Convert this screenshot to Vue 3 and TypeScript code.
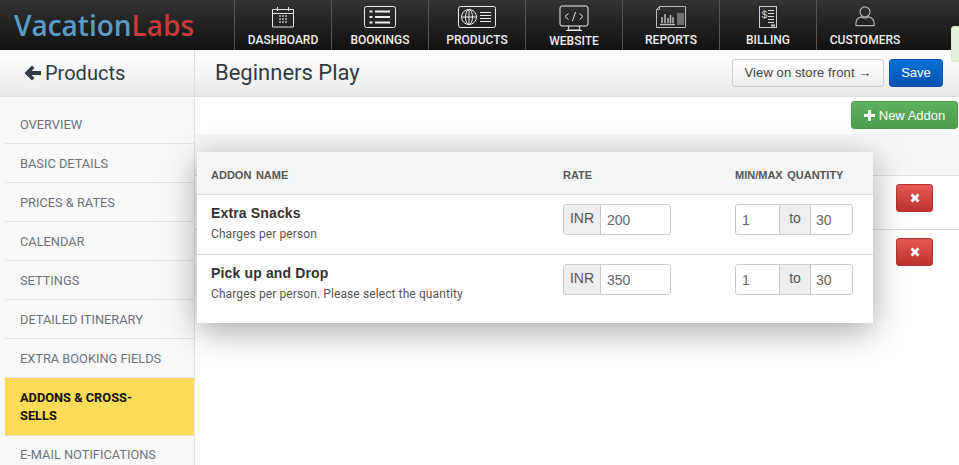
<template>
  <div class="page">
    <header class="topbar">
      <div class="logo"><span class="logo-blue">Vacation</span><span class="logo-red">Labs</span></div>
      <nav class="nav">
        <a v-for="item in navItems" :key="item.label" class="nav-item" :class="{ 'nav-item--low': item.label === 'WEBSITE' }">
          <span class="nav-icon">
            <svg v-if="item.label === 'DASHBOARD'" width="24" height="24" viewBox="0 0 24 24" fill="none" stroke="#e6e6e6">
              <path d="M1.5 4.5h21v17.500h-21zM1.500 8.500h21M6.500 2v4M17.500 2v4M6.500 4.500h11" />
              <path d="M8 11h2M11 11h2M14 11h2M8 14h2M11 14h2M14 14h2M8 17h2M11 17h2M14 17h2" stroke-width="1.500" stroke="#bbb" />
            </svg>
            <svg v-else-if="item.label === 'BOOKINGS'" width="32" height="24" viewBox="0 0 32 24" fill="none" stroke="#eee">
              <rect x="0.500" y="1.500" width="31" height="21" rx="2" />
              <path d="M11 6.500h15M11 12h15M11 17.500h15" stroke-width="2" />
              <path d="M5.500 6.500h3M5.500 12h3M5.500 17.500h3" stroke-width="2" />
            </svg>
            <svg v-else-if="item.label === 'PRODUCTS'" width="38" height="24" viewBox="0 0 38 24" fill="none" stroke="#eee">
              <rect x="0.500" y="1.500" width="37" height="21" rx="2" />
              <circle cx="11" cy="12" r="7.500" />
              <ellipse cx="11" cy="12" rx="3.500" ry="7.500" />
              <path d="M3.500 12h15M11 4.500v15M22 7.500h11M22 10.500h11M22 13.500h11M22 16.500h11" />
            </svg>
            <svg v-else-if="item.label === 'WEBSITE'" width="30" height="28" viewBox="0 0 30 28" fill="none" stroke="#eee">
              <rect x="1" y="1" width="28" height="20" rx="2" />
              <path d="M10 21l-1 4h12l-1-4M7 25.500h16" />
              <path d="M9.500 8.500l-3.500 3 3.500 3M20.500 8.500l3.500 3-3.500 3M16.500 7l-3 9" stroke="#ddd" />
            </svg>
            <svg v-else-if="item.label === 'REPORTS'" width="32" height="24" viewBox="0 0 32 24" fill="none" stroke="#bbb">
              <path d="M4.500 1.500h26v21h-29v-18zM4.500 1.500v3h-3" />
              <path d="M5 19.500h15M7 18v-6M10 18v-9M13 18v-5M15.500 18v-8M18 18v-6" stroke-width="1.500" />
              <path d="M22 9h7M22 11h7M22 13h7M22 15h7M22 17h7M22 19h7" />
            </svg>
            <svg v-else-if="item.label === 'BILLING'" width="20" height="24" viewBox="0 0 20 24" fill="none" stroke="#ccc">
              <rect x="1.500" y="1.500" width="17" height="21" />
              <text x="3.500" y="13" font-size="10" fill="#ddd" stroke="none" font-family="Liberation Mono, monospace">$</text>
              <path d="M10 5.500h6M10 8.500h6M10 11.500h6M10 14.500h6M10 17.500h6" stroke="#ddd" />
              <path d="M13 20.500h4" stroke-width="2" />
            </svg>
            <svg v-else width="20" height="22" viewBox="0 0 22 24" fill="none" stroke="#b5b5b5" stroke-width="1.300">
              <circle cx="11" cy="7.500" r="5.500" />
              <path d="M7 13c-4 1-6 3.500-6 7v2.500h20V20c0-3.500-2-6-6-7-2.500 1.500-5.500 1.500-8 0z" />
            </svg>
          </span>
          <span class="nav-label">{{ item.label }}</span>
        </a>
      </nav>
    </header>

    <div class="subbar">
      <div class="subbar-left">
        <svg class="back-icon" width="17" height="16" viewBox="0 0 17 16"><path d="M8 0.500l2.500 2.500-3 3H17v4H7.500l3 3L8 15.500 0.500 8z" fill="#333a42" /></svg>
        <span>Products</span>
      </div>
      <div class="subbar-main">
        <h1 class="page-title">Beginners Play</h1>
        <div class="subbar-actions">
          <button class="btn btn-light">View on store front →</button>
          <button class="btn btn-blue">Save</button>
        </div>
      </div>
    </div>

    <div class="body">
      <aside class="sidebar">
        <a v-for="link in sideLinks" :key="link" class="side-link" :class="{ 'side-link--active': link === activeLink }">{{ link }}</a>
      </aside>

      <main class="content">
        <div class="toolbar">
          <button class="btn btn-green">
            <svg width="11" height="11" viewBox="0 0 11 11"><path d="M4 0h3v4h4v3H7v4H4V7H0V4h4z" fill="#fff" /></svg>
            New Addon
          </button>
        </div>
        <div class="bg-table">
          <div class="bg-head"></div>
          <div v-for="n in 2" :key="n" class="bg-row">
            <button class="btn-del" aria-label="Remove">
              <svg width="10" height="10" viewBox="0 0 10 10"><path d="M2.500 0.500L5 3l2.500-2.500 2 2L7 5l2.500 2.500-2 2L5 7 2.500 9.500l-2-2L3 5 0.500 2.500z" fill="#fff" /></svg>
            </button>
          </div>
        </div>
      </main>
    </div>

    <section class="modal">
      <div class="modal-row modal-head">
        <div class="col-name">ADDON NAME</div>
        <div class="col-rate">RATE</div>
        <div class="col-qty">MIN/MAX QUANTITY</div>
      </div>
      <div v-for="addon in addons" :key="addon.name" class="modal-row addon">
        <div class="col-name">
          <div class="addon-name">{{ addon.name }}</div>
          <div class="addon-note">{{ addon.note }}</div>
        </div>
        <div class="col-rate">
          <div class="field field-rate">
            <span class="field-tag">INR</span>
            <span class="field-value">{{ addon.rate }}</span>
          </div>
        </div>
        <div class="col-qty">
          <div class="field field-qty">
            <span class="field-value field-min">{{ addon.min }}</span>
            <span class="field-tag field-to">to</span>
            <span class="field-value">{{ addon.max }}</span>
          </div>
        </div>
      </div>
    </section>

    <div class="notice"></div>
  </div>
</template>

<script setup lang="ts">
interface Addon {
  name: string
  note: string
  rate: number
  min: number
  max: number
}

const navItems = [
  { label: 'DASHBOARD' },
  { label: 'BOOKINGS' },
  { label: 'PRODUCTS' },
  { label: 'WEBSITE' },
  { label: 'REPORTS' },
  { label: 'BILLING' },
  { label: 'CUSTOMERS' },
]

const activeLink = 'ADDONS & CROSS-SELLS'

const sideLinks = [
  'OVERVIEW',
  'BASIC DETAILS',
  'PRICES & RATES',
  'CALENDAR',
  'SETTINGS',
  'DETAILED ITINERARY',
  'EXTRA BOOKING FIELDS',
  activeLink,
  'E-MAIL NOTIFICATIONS',
]

const addons: Addon[] = [
  { name: 'Extra Snacks', note: 'Charges per person', rate: 200, min: 1, max: 30 },
  { name: 'Pick up and Drop', note: 'Charges per person. Please select the quantity', rate: 350, min: 1, max: 30 },
]
</script>

<style>
html,
body {
  margin: 0;
  overflow: hidden;
}
</style>

<style scoped>
.page {
  position: relative;
  width: 959px;
  height: 465px;
  overflow: hidden;
  background: #fff;
  font-family: Roboto, "Liberation Sans", sans-serif;
  color: #333;
}

/* Top bar */
.topbar {
  display: flex;
  height: 50px;
  background: linear-gradient(180deg, #333 0%, #111 100%);
}

.logo {
  width: 234px;
  padding: 5px 0 0 14px;
  box-sizing: border-box;
  font-family: "Open Sans", sans-serif;
  font-size: 28px;
  font-weight: 600;
  line-height: 40px;
}

.logo-blue {
  color: #5a9cc8;
}

.logo-red {
  color: #c53a3c;
}

.nav {
  display: flex;
}

.nav-item {
  display: flex;
  flex-direction: column;
  align-items: center;
  width: 97px;
  box-sizing: border-box;
  border-left: 1px solid #555;
  color: #eee;
}

.nav-icon {
  display: flex;
  align-items: flex-start;
  height: 28px;
  padding-top: 5px;
}

.nav-label {
  font-size: 12px;
  font-weight: 500;
  line-height: 14px;
}

.nav-item--low .nav-label {
  margin-top: 1px;
}

/* Sub header */
.subbar {
  display: flex;
  height: 47px;
  box-sizing: border-box;
  background: linear-gradient(180deg, #fff 0%, #e9e9e9 100%);
  border-bottom: 1px solid #ddd;
}

.subbar-left {
  display: flex;
  align-items: center;
  gap: 4px;
  width: 195px;
  box-sizing: border-box;
  padding: 0 0 1px 24px;
  border-right: 1px solid #ddd;
  font-size: 20px;
  color: #333a42;
}

.subbar-main {
  display: flex;
  flex: 1;
  align-items: center;
  justify-content: space-between;
  padding: 0 16px 0 20px;
}

.page-title {
  margin: 0 0 2px;
  font-size: 22px;
  font-weight: 400;
  color: #333a42;
}

.subbar-actions {
  display: flex;
  gap: 5px;
  margin-bottom: 1px;
}

.btn {
  height: 28px;
  box-sizing: border-box;
  border-radius: 3px;
  font-family: "Liberation Sans", Arial, sans-serif;
  font-size: 13px;
  padding: 0;
}

.btn-light {
  width: 152px;
  border: 1px solid #ccc;
  background: linear-gradient(180deg, #fff 0%, #eee 100%);
  color: #444;
  letter-spacing: 0.1px;
}

.btn-blue {
  width: 54px;
  border: 1px solid #0a58b8;
  background: linear-gradient(180deg, #0a72d8 0%, #0450ac 100%);
  color: #fff;
}

.btn-green {
  display: flex;
  align-items: center;
  justify-content: center;
  gap: 4px;
  width: 107px;
  border: 1px solid #4d994d;
  background: linear-gradient(180deg, #60b260 0%, #4b9c4b 100%);
  color: #fff;
}

/* Body */
.body {
  display: flex;
  height: 368px;
}

.sidebar {
  width: 195px;
  flex: none;
  box-sizing: border-box;
  padding: 8px 0 0 5px;
  background: #f9f9f9;
  border-right: 1px solid #e2e2e2;
}

.side-link {
  display: block;
  height: 39px;
  box-sizing: border-box;
  padding: 0 15px;
  border-bottom: 1px solid #e2e2e2;
  font-size: 12.800px;
  line-height: 39px;
  color: #6b727a;
}

.side-link:last-child {
  line-height: 37px;
}

.side-link--active {
  height: 58px;
  padding: 11px 40px 0 15px;
  background: #ffdb58;
  font-weight: 700;
  line-height: 18px;
  color: #111;
}

.content {
  flex: 1;
  min-width: 0;
}

.toolbar {
  display: flex;
  justify-content: flex-end;
  padding: 4px 1px 0 0;
}

.bg-table {
  margin-top: 5px;
}

.bg-head {
  height: 42px;
  box-sizing: border-box;
  background: #f5f6f8;
  border-bottom: 1px solid #ddd;
}

.bg-row {
  display: flex;
  justify-content: flex-end;
  height: 54px;
  box-sizing: border-box;
  padding: 8px 26px 0 0;
  border-bottom: 1px solid #ddd;
}

.bg-row:last-child {
  border-bottom: 0;
}

.btn-del {
  display: flex;
  align-items: center;
  justify-content: center;
  width: 37px;
  height: 28px;
  padding: 0;
  border: 1px solid #b53330;
  border-radius: 3px;
  background: linear-gradient(180deg, #e55a57 0%, #bb3330 100%);
}

/* Addon dialog, lies over the table */
.modal {
  position: absolute;
  left: 197px;
  top: 152px;
  width: 676px;
  height: 171px;
  background: #fff;
  box-shadow: 0 8px 32px rgba(0, 0, 0, 0.35);
}

.modal-row {
  display: flex;
  box-sizing: border-box;
  padding: 0 14px;
}

.modal-head {
  height: 43px;
  padding-top: 17px;
  background: #f5f6f8;
  border-bottom: 1px solid #ddd;
  font-family: "Liberation Sans", Arial, sans-serif;
  font-size: 11px;
  font-weight: 700;
  word-spacing: 1.500px;
  color: #555;
}

.addon {
  height: 60px;
  padding-top: 9px;
  border-bottom: 1px solid #ddd;
}

.addon:last-child {
  border-bottom: 0;
}

.col-name {
  width: 352px;
  flex: none;
}

.col-rate {
  width: 172px;
  flex: none;
}

.addon-name {
  font-family: "Liberation Sans", Arial, sans-serif;
  font-size: 14px;
  font-weight: 700;
  line-height: 18px;
  letter-spacing: 0.15px;
  color: #333;
}

.addon-note {
  margin-top: 5px;
  font-size: 12px;
  line-height: 14px;
  letter-spacing: 0.1px;
  color: #555;
}

.field {
  display: flex;
  height: 31px;
  box-sizing: border-box;
  border: 1px solid #ccc;
  border-radius: 3px;
  overflow: hidden;
  font-family: "Liberation Sans", Arial, sans-serif;
  font-size: 14px;
  line-height: 27px;
}

.field-rate {
  width: 108px;
}

.field-qty {
  width: 118px;
}

.field-tag {
  flex: none;
  box-sizing: border-box;
  width: 37px;
  text-align: center;
  background: #eee;
  color: #555;
  border-right: 1px solid #ccc;
}

.field-value {
  flex: 1;
  padding-left: 6px;
  color: #666;
  line-height: 30px;
}

.field-min {
  flex: none;
  box-sizing: border-box;
  width: 43px;
}

.field-to {
  width: 31px;
  border-left: 1px solid #ccc;
  border-right: 0;
}

.field-qty .field-value:last-child {
  padding-left: 5px;
  border-left: 1px solid #ccc;
}

.notice {
  position: absolute;
  right: -4px;
  top: 26px;
  width: 10px;
  height: 34px;
  background: #e4f2dc;
  border: 1px solid #d6e9c6;
  border-radius: 3px;
}
</style>
